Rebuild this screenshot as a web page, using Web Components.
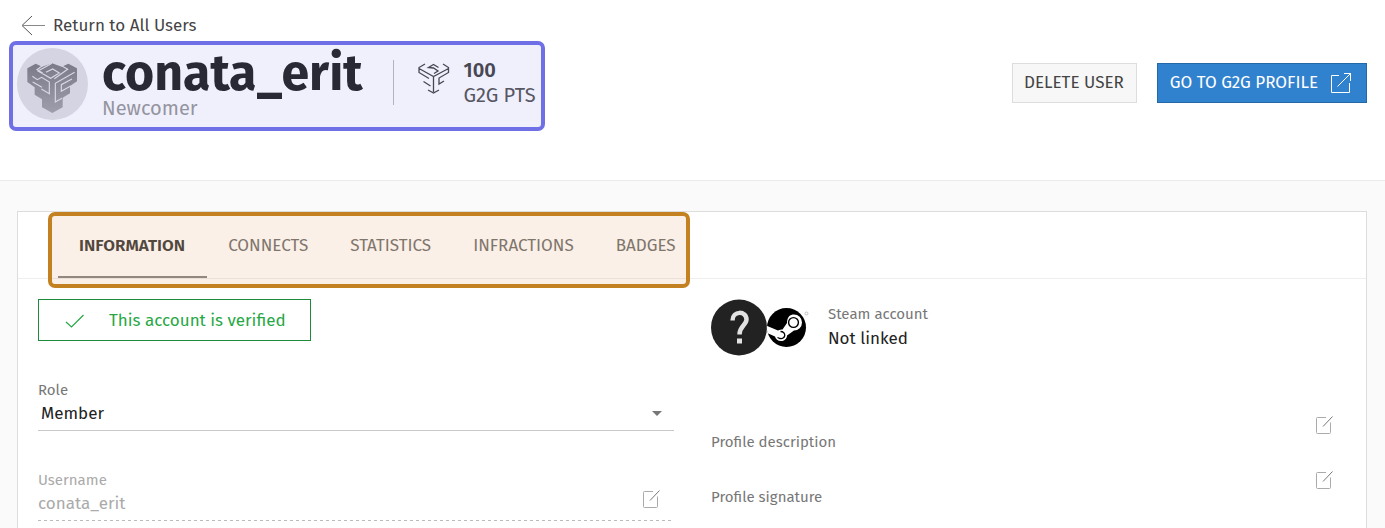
<!DOCTYPE html>
<html lang="en">
<head>
<meta charset="utf-8">
<title>User profile</title>
<style>
  html { height: 100%; }
  body {
    margin: 0;
    min-height: 100%;
    display: flex;
    flex-direction: column;
    background: #fafafa;
    color: #222;
    font: 17px/20px "Fira Sans", "Noto Sans", sans-serif;
  }
  user-page { flex: 1; }
</style>
</head>
<body>
<user-page></user-page>

<template id="user-page">
  <style>
    :host { display: flex; flex-direction: column; }
    header { background: #fff; border-bottom: 1px solid #ebebeb; padding: 16px 18px 49px 9px; }
    .bar { display: flex; justify-content: space-between; align-items: flex-start; margin-top: 5px; }
    .actions { display: flex; gap: 20px; margin-top: 22px; }
    main { flex: 1; display: flex; padding: 30px 18px 0 17px; }
    .card { flex: 1; background: #fff; border: 1px solid #ddd; border-bottom: 0; }
    .tabs { display: flex; border-bottom: 1px solid #eee; padding-left: 30px; }
    .columns { display: grid; grid-template-columns: 1fr 1fr; gap: 36px; padding: 20px 20px 0; }
    .left select-field { margin-top: 39px; }
    .left text-field { margin-top: 39px; }
    .right { padding-left: 1px; }
    steam-account { margin-bottom: 60px; }
  </style>
  <header>
    <back-link href="#users">Return to All Users</back-link>
    <div class="bar">
      <highlight-frame tone="violet">
        <user-identity rank="Newcomer" points="100" unit="G2G PTS">conata_erit</user-identity>
      </highlight-frame>
      <div class="actions">
        <action-button>DELETE USER</action-button>
        <action-button kind="primary" icon="external">GO TO G2G PROFILE</action-button>
      </div>
    </div>
  </header>
  <main>
    <section class="card">
      <div class="tabs">
        <highlight-frame tone="amber">
          <tab-bar items="INFORMATION,CONNECTS,STATISTICS,INFRACTIONS,BADGES"></tab-bar>
        </highlight-frame>
      </div>
      <div class="columns">
        <div class="left">
          <verified-badge>This account is verified</verified-badge>
          <select-field label="Role" options="Member,Moderator,Administrator"></select-field>
          <text-field label="Username" value="conata_erit"></text-field>
        </div>
        <div class="right">
          <steam-account status="Not linked">Steam account</steam-account>
          <editable-row>Profile description</editable-row>
          <editable-row>Profile signature</editable-row>
        </div>
      </div>
    </section>
  </main>
</template>

<script>
const define = (name, render) => customElements.define(name, class extends HTMLElement {
  constructor() { super(); this.attachShadow({ mode: "open" }); }
  connectedCallback() { this.shadowRoot.innerHTML = render(this); }
});

const icons = {
  arrow: [24, 20, `<path d="M11 0 1 9.500 11 19" stroke="#555"/><path d="M1 9.500H24" stroke="#888"/>`],
  external: [22, 22, `<path d="M9 3.500H1.500V20.500H19.500V11M7.500 14.500 21 1M14 1.500H20.500V9" stroke="#fff"/>`],
  check: [20, 14, `<path d="M1 8 6.500 13 18.500 1" stroke="#28a745" stroke-width="1.200"/>`],
  edit: [18, 18, `<path d="M11 1.500H2.500Q1.500 1.500 1.500 2.500V16.500Q1.500 17.500 2.500 17.500H14.500Q15.500 17.500 15.500 16.500V6.500" stroke="#aaa"/><path d="M8 10.500 17.500 0.500" stroke="#777"/>`],
  points: [32, 32, `<path d="M7 1 1 4.500V9.500L11 15.500M1 5.500 15.500 13.500 30.500 5.500M15.500 13.500V29M25 1 30.500 4.500V9.500L21 15V21L26 18M16 10.500 20 8 15.500 5 10.500 4.500 15.500 1.500 20.500 4.500M5.500 18.500 12.500 23M10 27 15.500 30 21 27" stroke="#444" stroke-width="1.300"/>`]
};
define("line-icon", el => {
  const [w, h, body] = icons[el.getAttribute("name")];
  return `<style>:host{display:block;flex:none;width:${w}px;height:${h}px}svg{display:block}</style>
    <svg width="${w}" height="${h}" viewBox="0 0 ${w} ${h}" fill="none" aria-hidden="true">${body}</svg>`;
});

define("back-link", el => `
  <style>
    :host { display: flex; }
    a { display: flex; align-items: center; gap: 8px; margin-left: 12px; color: #444; text-decoration: none; }
  </style>
  <a href="${el.getAttribute("href")}"><line-icon name="arrow"></line-icon><slot></slot></a>`);

define("highlight-frame", () => `
  <style>
    :host { display: block; position: relative; }
    :host([tone=violet]) { padding: 7px 9px 11px 8px; }
    :host([tone=amber]) { padding: 0 14px 0 10px; }
    :host::after { content: ""; position: absolute; inset: 0; border-radius: 7px; pointer-events: none; }
    :host([tone=violet])::after { border: 4px solid #6f6fe6; background: rgba(110, 110, 230, .1); background-clip: padding-box; }
    :host([tone=amber])::after { bottom: -10px; border: 4px solid #c48122; background: rgba(205, 110, 20, .1); background-clip: padding-box; }
  </style><slot></slot>`);

define("user-avatar", () => `
  <style>:host { display: block; flex: none; width: 71px; height: 72px; } svg { display: block; }</style>
  <svg width="71" height="72" viewBox="51 144 213 216" aria-hidden="true">
    <defs><linearGradient id="g" x1="0" y1="0" x2="0" y2="1"><stop offset="0" stop-color="#7c7c80"/><stop offset="1" stop-color="#a4a4a6"/></linearGradient></defs>
    <ellipse cx="157.500" cy="252" rx="106.500" ry="108" fill="#e0e0e2"/>
    <path fill="url(#g)" d="M82 205 107 191 127 200 156 190 185 200 205 191 231 205V244L210 258V280L188 293V322L157 339 126 322V298L104 284V262L82 246Z"/>
    <path fill="none" stroke="#e4e4e6" stroke-width="3.500" d="M127 197 111 209 128 219M156 190 114 213 152 235 178 219 158 207 138 217M186 198 203 208 163 236M97 229 112 239 125 232 148 246V281L124 267M98 246 126 262M224 217 166 250V306L186 295M216 237 184 254V274L212 258"/>
  </svg>`);

define("user-identity", el => `
  <style>
    :host { display: flex; align-items: flex-start; }
    .name { margin: 0 30px 0 14px; }
    h1 { margin: 0; font-size: 50px; line-height: 50px; font-weight: 700; color: #222; }
    p { margin: 0; font-size: 20px; line-height: 20px; color: #999; }
    .points { display: flex; margin-top: 12px; border-left: 1px solid #bbb; height: 45px; padding-left: 24px; }
    line-icon { margin: 3px 14px 0 0; }
    .sum { margin-top: -2px; font-size: 20px; line-height: 25px; color: #555; white-space: nowrap; }
    b { display: block; font-weight: 600; color: #444; }
  </style>
  <user-avatar></user-avatar>
  <div class="name"><h1><slot></slot></h1><p>${el.getAttribute("rank")}</p></div>
  <div class="points"><line-icon name="points"></line-icon>
    <div class="sum"><b>${el.getAttribute("points")}</b>${el.getAttribute("unit")}</div></div>`);

define("action-button", el => `
  <style>
    :host { display: block; }
    button { display: flex; align-items: center; gap: 12px; height: 40px; padding: 0 12px 0 11px; font: inherit; white-space: nowrap;
      color: #444; background: #f7f7f7; border: 1px solid #ddd; }
    :host([kind=primary]) button { padding: 0 14px 0 12px; color: #fff; background: #3182ce; border-color: #2568a8; }
  </style>
  <button type="button"><slot></slot>${el.hasAttribute("icon") ? `<line-icon name="${el.getAttribute("icon")}"></line-icon>` : ""}</button>`);

define("tab-bar", el => `
  <style>
    :host { display: flex; }
    button { height: 66px; padding: 3px 21px 0; border: 0; border-bottom: 2px solid transparent; background: none; font: inherit; color: #777; }
    button[aria-selected=true] { font-weight: 600; color: #444; border-color: #8c8c8c; padding-right: 22px; }
    button:last-child { padding-right: 0; }
  </style>
  ${el.getAttribute("items").split(",").map((t, i) => `<button type="button" role="tab" aria-selected="${i === 0}">${t}</button>`).join("")}`);

define("verified-badge", () => `
  <style>
    :host { display: flex; align-items: center; gap: 24px; width: fit-content; box-sizing: border-box; height: 42px; padding: 1px 24px 0 26px;
      border: 1px solid #1e8a3c; color: #28a745; }
  </style><line-icon name="check"></line-icon><slot></slot>`);

define("select-field", el => `
  <style>
    :host { display: block; position: relative; border-bottom: 1px solid #c8c8c8; }
    label { display: block; font-size: 15px; line-height: 20px; color: #777; }
    select { appearance: none; display: block; box-sizing: border-box; width: 100%; height: 30px; margin: 0; padding: 0 3px 2px; border: 0; background: none; font: inherit; color: #222; }
    :host::after { content: ""; position: absolute; right: 12px; bottom: 14px; border: 5px solid transparent; border-top-color: #777; border-bottom: 0; pointer-events: none; }
  </style>
  <label for="control">${el.getAttribute("label")}</label>
  <select id="control">${el.getAttribute("options").split(",").map(o => `<option>${o}</option>`).join("")}</select>`);

define("text-field", el => `
  <style>
    :host { display: block; }
    label { display: block; font-size: 15px; line-height: 20px; color: #aaa; }
    .row { display: flex; align-items: center; height: 30px; }
    input { flex: 1; min-width: 0; height: 26px; margin: 0 0 4px; padding: 0; border: 0; background: none; font: inherit; color: #aaa; }
    button { margin: 0 14px 12px 0; padding: 0; border: 0; background: none; }
    .rule { height: 1px; background: repeating-linear-gradient(90deg, #bbb 0 3px, transparent 3px 6px); }
  </style>
  <label for="control">${el.getAttribute("label")}</label>
  <div class="row"><input id="control" value="${el.getAttribute("value")}" disabled>
    <button type="button" aria-label="Edit"><line-icon name="edit"></line-icon></button></div>
  <div class="rule"></div>`);

define("steam-account", el => `
  <style>
    :host { display: flex; align-items: center; height: 57px; }
    svg { display: block; flex: none; margin-right: 19px; }
    .text { padding-bottom: 2px; }
    .label { font-size: 15px; line-height: 24px; color: #777; }
    .status { line-height: 26px; }
  </style>
  <svg width="98" height="57" viewBox="0 0 98 57" aria-hidden="true">
    <circle cx="28" cy="28.500" r="28" fill="#222"/>
    <path d="M21.500 21.500C21.500 11.500 35.500 11.500 35.500 20.500C35.500 26 28.500 27 28.500 35.500" fill="none" stroke="#e2e2e2" stroke-width="4.500"/>
    <rect x="26" y="39.500" width="5" height="5" fill="#e2e2e2"/>
    <clipPath id="c"><circle cx="75.500" cy="28.500" r="19.700"/></clipPath>
    <circle cx="75.500" cy="28.500" r="19.500" fill="#000"/>
    <g clip-path="url(#c)">
      <path d="M54 26 67 31.500C69 30.500 70 30.500 71.500 30.500L76 24C76 18 79 15.500 83 15.500A8 8 0 0 1 83 31.500L76 36.500C76 40 73 42 70 42C67 42 64.500 40 64 37.500L54 33Z" fill="#fff"/>
      <circle cx="82.500" cy="23.500" r="4.900" fill="#fff" stroke="#000" stroke-width="1.400"/>
      <path d="M66.500 38.500 69 39.500C75 40.500 75.500 32.500 69.500 32.500" fill="none" stroke="#000" stroke-width="1.300"/>
    </g>
    <circle cx="95.500" cy="14.500" r="1.500" fill="none" stroke="#aaa" stroke-width=".7"/>
  </svg>
  <div class="text"><div class="label"><slot></slot></div><div class="status">${el.getAttribute("status")}</div></div>`);

define("editable-row", () => `
  <style>
    :host { display: flex; justify-content: space-between; align-items: flex-end; height: 36px; margin-bottom: 19px; font-size: 15px; color: #777; }
    button { align-self: flex-start; margin: 0 13px 0 0; padding: 0; border: 0; background: none; }
  </style>
  <span><slot></slot></span><button type="button" aria-label="Edit"><line-icon name="edit"></line-icon></button>`);

define("user-page", () => document.getElementById("user-page").innerHTML);
</script>
</body>
</html>
